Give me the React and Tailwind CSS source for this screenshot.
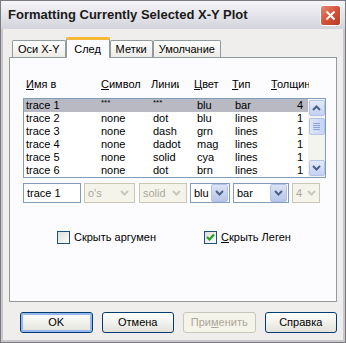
const font = { fontFamily: '"Liberation Sans", Arial, sans-serif' }

const rows = [
  ['trace 1', '***', '***', 'blu', 'bar', '4'],
  ['trace 2', 'none', 'dot', 'blu', 'lines', '1'],
  ['trace 3', 'none', 'dash', 'grn', 'lines', '1'],
  ['trace 4', 'none', 'dadot', 'mag', 'lines', '1'],
  ['trace 5', 'none', 'solid', 'cya', 'lines', '1'],
  ['trace 6', 'none', 'dot', 'brn', 'lines', '1'],
]

const Chevron = ({ up, color = '#4d6185' }) => (
  <svg width="9" height="6" viewBox="0 0 9 6">
    <path d={up ? 'M1 5 L4.5 1.5 L8 5' : 'M1 1 L4.5 4.5 L8 1'} fill="none" stroke={color} strokeWidth="2" />
  </svg>
)

const Combo = ({ value, width, disabled, arrow = 17 }) => (
  <div
    className={`h-[20px] flex items-center border ${disabled ? 'border-[#c9c7ba] bg-[#f5f4ea] text-[#aca899]' : 'border-[#7f9db9] bg-white text-black'}`}
    style={{ width }}
  >
    <span className="flex-1 pl-[3px] whitespace-nowrap">{value}</span>
    <div
      className={`h-[18px] mr-[1px] flex items-center justify-center rounded-[2px] ${disabled ? 'bg-[#f5f4ea]' : 'bg-gradient-to-b from-[#dce3f4] to-[#b7c5e8] border border-[#b4c3ea]'}`}
      style={{ width: arrow }}
    >
      <Chevron color={disabled ? '#c9c7ba' : '#4d6185'} />
    </div>
  </div>
)

const Btn = ({ children, primary, disabled }) => (
  <div
    className={`w-[73px] h-[21px] rounded-[3px] border flex items-center justify-center ${disabled ? 'border-[#c9c7ba] bg-[#f5f4ea] text-[#aca899]' : 'border-[#003c74] bg-gradient-to-b from-white to-[#e3e3db] text-black'} ${primary ? 'shadow-[inset_0_0_0_2px_#97b7f0]' : ''}`}
  >
    {children}
  </div>
)

const Check = ({ checked, children }) => (
  <div className="flex items-center gap-[4px]">
    <div className="w-[13px] h-[13px] border border-[#1c5180] bg-gradient-to-br from-[#dcdcd7] to-white flex items-center justify-center">
      {checked && (
        <svg width="9" height="9" viewBox="0 0 9 9">
          <path d="M1 4 L3.5 6.5 L8 1.5" fill="none" stroke="#21a121" strokeWidth="2.2" />
        </svg>
      )}
    </div>
    <span>{children}</span>
  </div>
)

export default function App() {
  return (
    <div className="w-[346px] h-[343px] bg-[#c8c8cc] border border-[#7a7a80] flex flex-col text-[11px] text-black" style={font}>
      {/* title bar */}
      <div className="h-[28px] shrink-0 bg-gradient-to-b from-[#f6f6f8] via-[#e4e4ea] to-[#d4d4dc] flex items-center justify-between pl-[7px] pr-[4px]">
        <span className="text-[13px] font-bold text-[#1a1a1a]">Formatting Currently Selected X-Y Plot</span>
        <div className="w-[21px] h-[21px] rounded-[3px] border border-white bg-gradient-to-br from-[#e88a78] via-[#d4523a] to-[#b83a22] flex items-center justify-center">
          <svg width="11" height="11" viewBox="0 0 11 11">
            <path d="M1.5 1.5 L9.5 9.5 M9.5 1.5 L1.5 9.5" stroke="white" strokeWidth="2" />
          </svg>
        </div>
      </div>

      {/* body */}
      <div className="flex-1 mx-[2px] mb-[2px] bg-[#efeeec] flex flex-col px-[6px]">
        {/* tabs */}
        <div className="flex items-end h-[28px] pl-[3px]">
          <div className="h-[17px] px-[5px] border border-b-0 border-[#919b9c] bg-gradient-to-b from-white to-[#ecebe6] rounded-t-[2px] flex items-center">Оси X-Y</div>
          <div className="h-[21px] w-[44px] -mb-px relative z-10 border border-b-0 border-[#919b9c] border-t-[3px] border-t-[#f5b935] bg-[#fcfcfe] rounded-t-[2px] flex items-center justify-center">След</div>
          <div className="h-[17px] px-[5px] border border-b-0 border-[#919b9c] bg-gradient-to-b from-white to-[#ecebe6] rounded-t-[2px] flex items-center">Метки</div>
          <div className="h-[17px] px-[5px] border border-b-0 border-[#919b9c] bg-gradient-to-b from-white to-[#ecebe6] rounded-t-[2px] flex items-center">Умолчание</div>
        </div>

        {/* panel */}
        <div className="h-[245px] border border-[#919b9c] bg-[#fcfcfe] flex flex-col pl-[13px] pt-[19px]">
          <div className="flex h-[14px] items-center pl-[3px] whitespace-nowrap">
            <span className="w-[75px]"><u>И</u>мя в</span>
            <span className="w-[50px]"><u>С</u>имвол</span>
            <span className="w-[43px]"><span className="inline-block w-[28px] overflow-hidden align-bottom">Линии</span></span>
            <span className="w-[38px]"><u>Ц</u>вет</span>
            <span className="w-[39px]"><u>Т</u>ип</span>
            <span className="w-[38px] overflow-hidden"><u>Т</u>олщин.</span>
          </div>

          {/* list */}
          <div className="mt-[7px] w-[303px] h-[80px] border border-[#7f9db9] bg-white flex">
            <div className="flex-1 flex flex-col">
              {rows.map((r, i) => (
                <div key={i} className={`h-[13px] flex items-center pl-[2px] pr-[5px] leading-[13px] ${i === 0 ? 'bg-[#b9b9c3]' : ''}`}>
                  <span className="w-[75px]">{r[0]}</span>
                  <span className={`w-[52px] ${i === 0 ? 'text-[8px] self-start leading-[8px]' : ''}`}>{r[1]}</span>
                  <span className={`w-[44px] ${i === 0 ? 'text-[8px] self-start leading-[8px]' : ''}`}>{r[2]}</span>
                  <span className="w-[38px]">{r[3]}</span>
                  <span className="w-[40px]">{r[4]}</span>
                  <span className="flex-1 text-right">{r[5]}</span>
                </div>
              ))}
            </div>
            <div className="w-[17px] bg-[#f3f3ef] flex flex-col items-center py-[1px]">
              <div className="w-[16px] h-[16px] rounded-[2px] border border-[#b4c3ea] bg-gradient-to-b from-[#e4eafa] to-[#c3d1f2] flex items-center justify-center">
                <Chevron up />
              </div>
              <div className="w-[16px] h-[17px] mt-[2px] rounded-[2px] border border-[#b4c3ea] bg-gradient-to-r from-[#dfe6fa] to-[#c6d3f5] flex flex-col items-center justify-center gap-[1px]">
                <div className="w-[7px] h-px bg-[#8ea3d6]" />
                <div className="w-[7px] h-px bg-[#8ea3d6]" />
                <div className="w-[7px] h-px bg-[#8ea3d6]" />
                <div className="w-[7px] h-px bg-[#8ea3d6]" />
              </div>
              <div className="flex-1" />
              <div className="w-[16px] h-[16px] rounded-[2px] border border-[#b4c3ea] bg-gradient-to-b from-[#e4eafa] to-[#c3d1f2] flex items-center justify-center">
                <Chevron />
              </div>
            </div>
          </div>

          {/* edit row */}
          <div className="mt-[5px] flex items-center">
            <div className="w-[58px] h-[20px] border border-[#7f9db9] bg-white flex items-center pl-[3px]">trace 1</div>
            <div className="ml-[3px]"><Combo value="o's" width={51} disabled /></div>
            <div className="ml-[4px]"><Combo value="solid" width={48} disabled /></div>
            <div className="ml-[3px]"><Combo value="blu" width={40} /></div>
            <div className="ml-[3px]"><Combo value="bar" width={56} /></div>
            <div className="ml-[3px]"><Combo value="4" width={28} arrow={14} disabled /></div>
          </div>

          <div className="mt-[26px] flex pl-[34px]">
            <div className="w-[147px]"><Check>Скрыть аргумен</Check></div>
            <Check checked><u>С</u>крыть Леген</Check>
          </div>
        </div>

        {/* buttons */}
        <div className="flex mt-[10px] pl-[11px] gap-[9px]">
          <Btn primary>OK</Btn>
          <Btn>Отмена</Btn>
          <Btn disabled>При<u>м</u>енить</Btn>
          <Btn>Справка</Btn>
        </div>
      </div>
    </div>
  )
}
